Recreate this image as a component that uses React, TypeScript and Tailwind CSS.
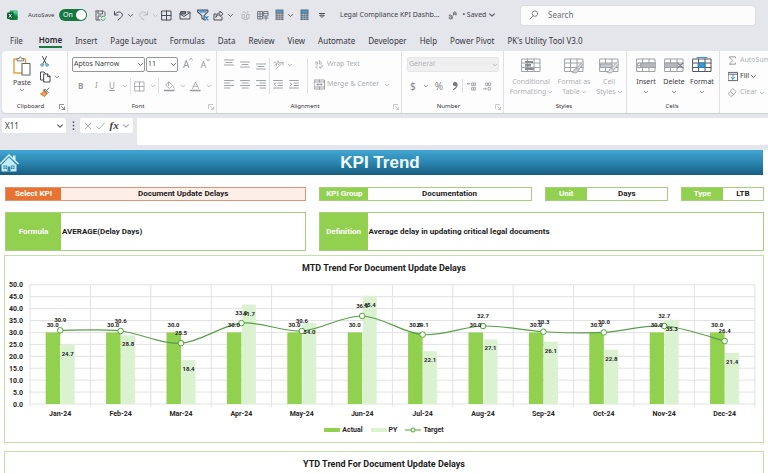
import React from "react";
import type { ReactNode } from "react";

type IconProps = { w?: number; h?: number; box?: string; color?: string; children: ReactNode };

function Icon({ w = 11, h = 11, box = "0 0 22 22", color = "#4b4d55", children }: IconProps) {
  return (
    <svg
      width={w}
      height={h}
      viewBox={box}
      fill="none"
      stroke={color}
      strokeWidth="2"
      strokeLinecap="round"
      strokeLinejoin="round"
      aria-hidden="true"
      className="shrink-0"
    >
      {children}
    </svg>
  );
}

function Chevron({ color = "#5d5f66", size = 5 }: { color?: string; size?: number }) {
  return (
    <Icon w={size} h={size} box="0 0 10 10" color={color}>
      <path d="M1 3l4 4 4-4" />
    </Icon>
  );
}

function Tool({ label, className = "", children }: { label: string; className?: string; children: ReactNode }) {
  return (
    <button type="button" aria-label={label} className={`flex shrink-0 items-center ${className}`}>
      {children}
    </button>
  );
}

function Calculator({ color }: { color: string }) {
  return (
    <Icon w={9} h={12} box="0 0 18 24" color={color}>
      <rect x="1" y="1" width="16" height="21" fill={color} stroke="none" />
      <rect x="3" y="3" width="12" height="4" fill="#4a9fd8" stroke="none" />
      <path d="M1 10.5h16M1 14.5h16M1 18.500h16M6.500 9v13M11.500 9v13" stroke="#d5d8de" strokeWidth="1" />
    </Icon>
  );
}

function TitleBar() {
  return (
    <header className="flex h-[30px] items-center text-[7px] text-[#3f4148]">
      <svg width="11" height="11" viewBox="0 0 22 22" className="ml-[7px] shrink-0" aria-label="Excel" role="img">
        <rect x="5" y="1" width="16" height="19" rx="2" fill="#21a366" />
        <path d="M13 1h6a2 2 0 012 2v4h-8z" fill="#5fd08c" />
        <path d="M5 11h16v7a2 2 0 01-2 2H7a2 2 0 01-2-2z" fill="#107c41" />
        <rect x="0" y="5" width="13" height="13" rx="2" fill="#0b6134" />
        <path d="M4 8l5 7M9 8l-5 7" stroke="#fff" strokeWidth="1.8" />
      </svg>
      <label className="ml-[10px] flex shrink-0 items-center text-[6px]">
        <span className="w-[31px]">AutoSave</span>
        <input type="checkbox" defaultChecked className="peer sr-only" />
        <span className="flex h-3 w-7 items-center justify-between rounded-full bg-[#187741] pr-px pl-1 text-[7px] text-white">
          On
          <span className="size-[10px] rounded-full bg-white" />
        </span>
      </label>
      <Tool label="Save" className="ml-2">
        <Icon>
          <path d="M2 2h15l3 3v6M2 2v18h8M6 2v6h9V2M6 20v-8h6" stroke="#5f6369" />
          <path d="M13 15a4 4 0 017-1M20 18a4 4 0 01-7 1" stroke="#3ba55d" />
        </Icon>
      </Tool>
      <Tool label="Undo" className="ml-[7px] gap-1">
        <Icon>
          <path d="M3 3v7h7M3.500 9.500C7 4 13 2.500 16.500 5.500S19 12 16 15l-6 5" />
        </Icon>
        <Chevron />
      </Tool>
      <Tool label="Redo" className="ml-[5px] gap-1">
        <Icon color="#b9bbc2">
          <path d="M19 3v7h-7M18.500 9.500C15 4 9 2.500 5.500 5.500S3 12 6 15l6 5" />
        </Icon>
        <Chevron color="#c3c5cb" />
      </Tool>
      <Tool label="Borders" className="ml-[3px]">
        <Icon>
          <path d="M2 2h18v18H2zM11 2v18M2 11h18" strokeLinejoin="miter" />
        </Icon>
      </Tool>
      <Tool label="Email" className="ml-[7px]">
        <Icon w={12}>
          <path d="M1 7v11h20V4h-6M1 8l8 5 12-8" />
          <path d="M3 3h9v5H3z" fill="#777b82" />
        </Icon>
      </Tool>
      <Tool label="Filter" className="ml-[6px]">
        <Icon w={12} h={12}>
          <path d="M1 2h19v3l-7 7v8l-4-3v-5L1 5z" />
          <path d="M3 3h15l-2 4H6z" fill="#4a9fd8" stroke="none" />
          <path d="M15 14l5 6M20 14l-5 6" stroke="#2f86c8" strokeWidth="2.500" />
        </Icon>
      </Tool>
      <Tool label="Share" className="ml-1 gap-1">
        <Icon>
          <path d="M6 8H2v12h16v-6M6 14c0-6 4-8 8-8V2l6 6-6 5V9.500c-4 0-6 1.500-8 4.500z" />
        </Icon>
        <Chevron />
      </Tool>
      <Tool label="Switch" className="ml-2">
        <Icon w={10} color="#b1b3ba">
          <path d="M4 4c3-2 6-1 7 2M3 9h5v8H3zM13 9h5v8h-5zM7 20c3 1 6 0 8-1M15 2v4" />
        </Icon>
      </Tool>
      <Tool label="Lookup" className="ml-[6px]">
        <Icon w={12} color="#777a80">
          <path d="M1 3h9v15H1zM13 3h8v9h-8zM1 8h9M1 13h9M5 3v15M13 7h8M12 16h9M17 12v8" />
        </Icon>
      </Tool>
      <Tool label="Calculate now" className="ml-[6px] gap-1">
        <Calculator color="#6b6f76" />
        <Chevron />
      </Tool>
      <Tool label="Calculate sheet" className="ml-[7px]">
        <Calculator color="#54697c" />
      </Tool>
      <Tool label="Customize toolbar" className="ml-[10px]">
        <Icon w={6} h={7} box="0 0 12 14">
          <path d="M1 3h10M2 7l4 4 4-4z" />
        </Icon>
      </Tool>
      <h1 className="mr-[9px] ml-[15px] shrink-0 whitespace-nowrap">Legal Compliance KPI Dashb...</h1>
      <Icon w={9} h={9} box="0 0 18 18" color="#63656c">
        <path d="M2 9c3-2 6-1 6 2v5M8 12c-4-1-6 0-6 2s4 3 6 0M11 8V4c0-3 5-3 5 0v4M11 6h5" />
      </Icon>
      <button type="button" className="ml-[5px] flex shrink-0 items-center gap-[3px] whitespace-nowrap">
        • Saved
        <Chevron size={6} />
      </button>
      <label className="ml-auto mr-[13px] flex h-[19px] w-[234px] items-center gap-[9px] rounded-[2px] bg-[#fcfcfc] px-2 shadow-[0_0_1px_#9a9ca3]">
        <Icon w={10} h={10} color="#77797f">
          <circle cx="13" cy="8" r="6" />
          <path d="M9 13l-7 7" />
        </Icon>
        <input aria-label="Search" placeholder="Search" className="min-w-0 flex-1 text-[8px] outline-none placeholder:text-[#6d6f75]" />
      </label>
    </header>
  );
}

const tabs = [
  "File", "Home", "Insert", "Page Layout", "Formulas", "Data", "Review",
  "View", "Automate", "Developer", "Help", "Power Pivot", "PK's Utility Tool V3.0",
];

function Tabs() {
  return (
    <nav className="flex h-[21px] items-start gap-[13px] pl-[10px] text-[8px] whitespace-nowrap text-[#35373e]">
      {tabs.map((tab) =>
        tab === "Home" ? (
          <button key={tab} type="button" className="ml-[3px] h-[18px] border-b-2 border-[#1c7a46] pt-1 font-semibold text-[#26282d]">
            {tab}
          </button>
        ) : (
          <button key={tab} type="button" className="h-[18px] pt-1">
            {tab}
          </button>
        ),
      )}
    </nav>
  );
}

function Launcher({ color }: { color: string }) {
  return (
    <Icon w={6} h={6} box="0 0 12 12" color={color}>
      <path d="M1 9V1h8M5 5l6 6M11 6v5H6" strokeWidth="1.500" />
    </Icon>
  );
}

function Group({ name, width, launcher, children }: { name: string; width: string; launcher?: string; children: ReactNode }) {
  return (
    <section aria-label={name} className={`flex shrink-0 flex-col border-r border-[#e1e1e4] ${width}`}>
      <div className="h-[49px]">{children}</div>
      <div className="flex h-[13px] items-center pr-[2px] text-[6px] text-[#2f3136]">
        <span className="flex-1 text-center">{name}</span>
        {launcher && <Launcher color={launcher} />}
      </div>
    </section>
  );
}

const OFF = "#a9abb0";

function ClipboardGroup() {
  return (
    <Group name="Clipboard" width="w-[66px]" launcher="#66686e">
      <div className="flex gap-1 pt-[5px] pl-[10px] text-[7px] text-[#3a3c42]">
        <button type="button" className="flex w-5 flex-col items-center leading-[10px]">
          <Icon w={20} h={20} box="0 0 40 40">
            <path d="M10 6H4v28h16M27 14V6h-6" stroke="#e2a24a" strokeWidth="3" />
            <path d="M10 9V5h4c0-4 5-4 5 0h4v4z" fill="#e9e9ea" stroke="#7d7f84" />
            <rect x="20" y="15" width="16" height="23" fill="#fff" stroke="#66686e" strokeWidth="2.200" />
          </Icon>
          <span className="mt-[2px]">Paste</span>
          <Chevron size={4} />
        </button>
        <div className="flex flex-col gap-1 pl-1">
          <Tool label="Cut">
            <Icon w={9} h={11} box="0 0 18 22">
              <path d="M5 1l7 14M13 1L6 15" />
              <circle cx="4" cy="18" r="2.500" stroke="#3b8ecb" />
              <circle cx="14" cy="18" r="2.500" stroke="#3b8ecb" />
            </Icon>
          </Tool>
          <Tool label="Copy" className="gap-1">
            <Icon w={11} h={12} box="0 0 22 24">
              <path d="M8 18H1V2h7l3 3M8 6h7l5 5v11H8zM15 6v5h5" />
            </Icon>
            <Chevron size={4} />
          </Tool>
          <Tool label="Format painter">
            <Icon w={10} h={10}>
              <path d="M20 2l-6 6M11 5l7 7-2 2-7-7z" stroke="#55575d" />
              <path d="M8 8l7 7-5 6-9-6c4-1 6-4 7-7z" fill="#f0a050" stroke="#cc6f27" />
            </Icon>
          </Tool>
        </div>
      </div>
    </Group>
  );
}

function FontGroup() {
  return (
    <Group name="Font" width="w-[149px]" launcher="#b5b7bc">
      <div className="flex flex-col gap-[6px] pt-[6px] pl-1">
        <div className="flex h-[15px] items-center text-[7px] text-[#3a3c42]">
          <div className="relative h-[15px] w-[73px]">
            <select aria-label="Font" className="block h-full w-full appearance-none rounded-[2px] border border-[#94969b] bg-white pl-px">
              <option>Aptos Narrow</option>
            </select>
            <span className="pointer-events-none absolute inset-y-0 right-[2px] flex items-center"><Chevron /></span>
          </div>
          <div className="relative ml-px h-[15px] w-8">
            <select aria-label="Font size" className="block h-full w-full appearance-none rounded-[2px] border border-[#94969b] bg-white pl-px">
              <option>11</option>
            </select>
            <span className="pointer-events-none absolute inset-y-0 right-[2px] flex items-center"><Chevron /></span>
          </div>
          <button type="button" aria-label="Grow font" className="ml-[5px] flex text-[10px] text-[#97999f]">
            A<Icon w={4} h={4} box="0 0 8 8" color={OFF}><path d="M1 6l3-4 3 4" /></Icon>
          </button>
          <button type="button" aria-label="Shrink font" className="ml-[7px] flex text-[9px] text-[#97999f]">
            A<Icon w={4} h={4} box="0 0 8 8" color={OFF}><path d="M1 2l3 4 3-4" /></Icon>
          </button>
        </div>
        <div className="flex h-4 items-center text-[8px] text-[#97999f]">
          <button type="button" className="ml-[6px] w-4 text-left font-bold">B</button>
          <button type="button" className="w-[15px] pl-px text-left font-serif italic">I</button>
          <button type="button" className="flex items-center gap-2 underline">U<Chevron color={OFF} size={4} /></button>
          <span className="mx-[3px] h-4 w-px bg-[#dfe0e2]" />
          <Tool label="Borders" className="gap-[6px]">
            <Icon color="#97999f"><path d="M2 2h18v18H2zM11 2v18M2 11h18" strokeWidth="1.500" /></Icon>
            <Chevron color={OFF} size={4} />
          </Tool>
          <span className="ml-[3px] mr-[5px] h-4 w-px bg-[#dfe0e2]" />
          <Tool label="Fill color" className="gap-[6px]">
            <Icon color="#97999f">
              <path d="M10 2l7 7-6 6-7-6zM9 2v7M18 10l2 4" strokeWidth="1.500" />
              <path d="M1 19h19" strokeWidth="3" />
            </Icon>
            <Chevron color={OFF} size={4} />
          </Tool>
          <Tool label="Font color" className="ml-[5px] gap-[6px]">
            <Icon color="#97999f">
              <path d="M5 15l6-13 6 13M7 10.500h8" strokeWidth="1.500" />
              <path d="M1 19h19" strokeWidth="3" />
            </Icon>
            <Chevron color={OFF} size={4} />
          </Tool>
        </div>
      </div>
    </Group>
  );
}

function Lines({ d }: { d: string }) {
  return (
    <Icon w={10} h={11} box="0 0 20 22" color="#a0a2a7">
      <path d={d} />
    </Icon>
  );
}

function AlignmentGroup() {
  return (
    <Group name="Alignment" width="w-[185px]" launcher="#b5b7bc">
      <div className="flex h-full items-start pt-[7px] pl-[7px] text-[7px] text-[#aeb0b4]">
        <div className="grid grid-cols-3 gap-x-[6px] gap-y-[9px] pt-px">
          <Tool label="Top align"><Lines d="M1 2h18M4 7h12M1 12h18" /></Tool>
          <Tool label="Middle align"><Lines d="M1 6h18M4 11h12M1 16h18" /></Tool>
          <Tool label="Bottom align"><Lines d="M1 10h18M4 15h12M1 20h18" /></Tool>
          <Tool label="Align left"><Lines d="M1 3h18M1 8h11M1 13h18M1 18h11" /></Tool>
          <Tool label="Center"><Lines d="M1 3h18M4 8h12M1 13h18M4 18h12" /></Tool>
          <Tool label="Align right"><Lines d="M1 3h18M8 8h11M1 13h18M8 18h11" /></Tool>
        </div>
        <span className="mx-[3px] h-9 w-px bg-[#dfe0e2]" />
        <div className="flex w-[30px] flex-col gap-[9px] pt-px">
          <Tool label="Orientation" className="gap-1">
            <Icon w={11} color="#a5a7ac">
              <path d="M6 20L20 7M20 7v5M20 7h-5M2 7c3-2 5 0 5 3v3M7 10c-4 0-5 4-2 4M10 3v8c4 1 6-5 0-5" strokeWidth="1.500" />
            </Icon>
            <Chevron color={OFF} size={4} />
          </Tool>
          <div className="flex gap-[6px]">
            <Tool label="Decrease indent"><Lines d="M1 3h18M10 8h9M10 13h9M1 18h18M6 8l-4 2.500 4 3" /></Tool>
            <Tool label="Increase indent"><Lines d="M1 3h18M10 8h9M10 13h9M1 18h18M2 8l4 2.500-4 3" /></Tool>
          </div>
        </div>
        <span className="ml-1 mr-[6px] h-9 w-px bg-[#dfe0e2]" />
        <div className="flex flex-col gap-[9px] pt-px">
          <button type="button" className="flex h-[11px] items-center gap-[3px]">
            <Icon w={10} color="#a5a7ac">
              <path d="M3 6c4-2 5 0 5 4M8 8c-5-1-6 3-3 3M12 2v8c6 1 6-6 0-5M8 14c-5-1-5 6 0 5M12 17h5c3 0 3-5 0-5M15 14l-3 3 3 3" strokeWidth="1.700" />
            </Icon>
            Wrap Text
          </button>
          <button type="button" className="flex h-[11px] items-center gap-[2px] whitespace-nowrap">
            <Icon w={11} color="#85878d">
              <path d="M1 2h20v18H1zM1 6h20M1 16h20M6 11h10M8 9l-2 2 2 2M14 9l2 2-2 2M11 2v4M11 16v4" strokeWidth="1.500" />
            </Icon>
            <span className="mr-1">Merge &amp; Center</span>
            <Chevron color={OFF} size={4} />
          </button>
        </div>
      </div>
    </Group>
  );
}

function NumberGroup() {
  return (
    <Group name="Number" width="w-[102px]" launcher="#b5b7bc">
      <div className="flex flex-col gap-1 pt-[6px] pl-[5px]">
        <div className="relative h-[15px] w-[92px]">
          <select aria-label="Number format" disabled className="block h-full w-full appearance-none rounded-[2px] border border-[#e6e6e8] bg-[#efeff0] pl-px text-[7px] text-[#b0b2b6] opacity-100">
            <option>General</option>
          </select>
          <span className="pointer-events-none absolute inset-y-0 right-[2px] flex items-center"><Chevron color={OFF} size={4} /></span>
        </div>
        <div className="flex h-5 items-center text-[10px] text-[#85878d]">
          <button type="button" aria-label="Currency" className="ml-[3px] flex items-center gap-2">$<Chevron size={4} color="#77797f" /></button>
          <button type="button" aria-label="Percent" className="ml-[7px]">%</button>
          <Tool label="Comma style" className="ml-[9px]">
            <Icon w={6} h={10} box="0 0 12 20" color="#77797f">
              <path d="M10 6c0 6-3 9-7 11" strokeWidth="2.500" />
              <circle cx="6" cy="6" r="3.500" fill="#77797f" />
            </Icon>
          </Tool>
          <span className="mx-1 h-[14px] w-px bg-[#dfe0e2]" />
          <Tool label="Increase decimal">
            <Icon w={10} color="#97999f">
              <path d="M7 5H1M3 3L1 5l2 2M11 3h3v6h-3zM16 3h3v6h-3zM11 13h3v6h-3zM16 13h3v6h-3z" strokeWidth="1.700" />
            </Icon>
          </Tool>
          <Tool label="Decrease decimal" className="ml-[6px]">
            <Icon w={10} color="#97999f">
              <path d="M1 16h6M5 14l2 2-2 2M7 3h3v6H7zM13 3h4v6h-4zM12 13h4v6h-4z" strokeWidth="1.700" />
            </Icon>
          </Tool>
        </div>
      </div>
    </Group>
  );
}

function GridIcon({ color = "#a0a2a7", children }: { color?: string; children?: ReactNode }) {
  return (
    <Icon w={20} h={17} box="0 0 40 34" color={color}>
      <path d="M2 4h36v25H2zM2 12h36M2 21h36M13 4v25M26 4v25" />
      {children}
    </Icon>
  );
}

function StylesGroup() {
  return (
    <Group name="Styles" width="w-[123px]">
      <div className="flex pt-[6px] pl-[4px] text-center text-[7px] leading-[10px] text-[#b0b2b6]">
        <button type="button" className="flex w-[46px] flex-col items-center">
          <GridIcon><path d="M8 8h16v4H8zM8 14h12v5H8zM8 22h18v4H8z" fill="#8a8c91" stroke="none" /></GridIcon>
          <span className="mt-[3px]">Conditional</span>
          <span className="flex items-center gap-[2px]">Formatting<Chevron color={OFF} size={4} /></span>
        </button>
        <button type="button" className="flex w-[40px] flex-col items-center whitespace-nowrap">
          <GridIcon><path d="M38 9L25 22l4 4 10-12M25 23c-5 0-4 6-9 7 6 4 12 1 13-4" fill="#d4d5d7" /></GridIcon>
          <span className="mt-[3px]">Format as</span>
          <span className="flex items-center gap-[2px]">Table<Chevron color={OFF} size={4} /></span>
        </button>
        <button type="button" className="flex w-[30px] flex-col items-center">
          <GridIcon><path d="M4 14h22v7H4z" fill="#c9cacd" /><path d="M38 9L25 22l4 4 10-12M25 23c-5 0-4 6-9 7 6 4 12 1 13-4" fill="#e4e4e6" /></GridIcon>
          <span className="mt-[3px]">Cell</span>
          <span className="flex items-center gap-[2px]">Styles<Chevron color={OFF} size={4} /></span>
        </button>
      </div>
    </Group>
  );
}

function CellsGroup() {
  return (
    <Group name="Cells" width="w-[93px]">
      <div className="flex pt-[6px] pl-[5px] text-[7px] leading-[10px] text-[#3a3c42]">
        <button type="button" className="flex w-7 flex-col items-center gap-[3px]">
          <GridIcon><path d="M10 12h30v9H10z" fill="#b5b7bb" /><path d="M12 16.500H1M6 12l-5 4.500L6 21" /></GridIcon>
          <span>Insert</span>
          <Chevron size={4} />
        </button>
        <button type="button" className="flex w-7 flex-col items-center gap-[3px]">
          <GridIcon><path d="M2 12h24v9H2z" fill="#b5b7bb" /><path d="M27 12l11 10M38 12L27 22" stroke="#85878d" strokeWidth="2.500" /></GridIcon>
          <span>Delete</span>
          <Chevron size={4} />
        </button>
        <button type="button" className="flex w-7 flex-col items-center gap-[3px]">
          <GridIcon color="#55575d"><path d="M13 12h13v9H13z" fill="#3d95d2" stroke="#2d7db5" /><path d="M10 1h20" stroke="#3d95d2" strokeWidth="2" /></GridIcon>
          <span>Format</span>
          <Chevron size={4} />
        </button>
      </div>
    </Group>
  );
}

function EditingGroup() {
  return (
    <section aria-label="Editing" className="flex flex-1 flex-col gap-[5px] overflow-hidden pt-1 pl-2 text-[7px] whitespace-nowrap text-[#b0b2b6]">
      <button type="button" className="flex h-[11px] items-center gap-[3px]">
        <Icon w={9} color="#85878d"><path d="M18 5V2H3l9 9-9 9h15v-3" /></Icon>
        AutoSum
      </button>
      <button type="button" className="flex h-[11px] items-center gap-[2px] text-[#3a3c42]">
        <Icon w={10} color="#55575d">
          <path d="M1 2h20v18H1zM1 6h20" />
          <path d="M11 8v9M7 13l4 4 4-4" stroke="#2f86c8" />
        </Icon>
        Fill <Chevron />
      </button>
      <button type="button" className="flex h-[11px] items-center gap-[3px]">
        <Icon w={9} color="#97999f"><path d="M12 2l8 7-10 11H6l-5-5zM6 9l8 7" /></Icon>
        Clear <Chevron color={OFF} size={4} />
      </button>
    </section>
  );
}

function FormulaBar() {
  return (
    <div className="flex h-8 items-start pt-[5px]">
      <label className="ml-[2px] flex h-[15px] w-16 items-center rounded-[2px] bg-white px-[3px]">
        <input aria-label="Name box" defaultValue="X11" className="min-w-0 flex-1 text-[8px] text-[#3a3c42] outline-none" />
        <Chevron size={6} />
      </label>
      <span className="flex h-[15px] w-[14px] items-center justify-center">
        <Icon w={3} h={9} box="0 0 6 18"><path d="M3 2v.1M3 9v.1M3 16v.1" strokeWidth="3.500" /></Icon>
      </span>
      <div className="flex h-[15px] w-[53px] items-center justify-between rounded-[2px] bg-white px-1">
        <Tool label="Cancel"><Icon w={8} h={8} box="0 0 16 16" color="#aeb0b4"><path d="M2 2l12 12M14 2L2 14" /></Icon></Tool>
        <Tool label="Enter"><Icon w={9} h={8} box="0 0 18 16" color="#aeb0b4"><path d="M1 9l5 5L17 2" /></Icon></Tool>
        <button type="button" aria-label="Insert function" className="font-['Liberation_Serif',serif] text-[11px] leading-none font-bold text-[#3a3c42] italic">fx</button>
        <Chevron color={OFF} size={6} />
      </div>
      <input aria-label="Formula bar" className="ml-1 h-[27px] min-w-0 flex-1 bg-white outline-none" />
    </div>
  );
}

type FieldProps = { label: string; value: string; labelWidth: string; tall?: boolean; orange?: boolean };

function Field({ label, value, labelWidth, tall, orange }: FieldProps) {
  return (
    <dl className={`flex border ${tall ? "h-[39px]" : "h-[14px]"} ${orange ? "border-[#dd9475] bg-[#fdeee7]" : "border-[#a5cf7c] bg-white"} text-[8px] font-bold`}>
      <dt className={`flex shrink-0 items-center justify-center text-white ${labelWidth} ${orange ? "bg-[#e87331]" : "bg-[#92d050]"}`}>{label}</dt>
      <dd className={`flex flex-1 items-center text-[#1c1c1c] ${tall ? "pl-px" : "justify-center"}`}>{value}</dd>
    </dl>
  );
}

const months = ["Jan", "Feb", "Mar", "Apr", "May", "Jun", "Jul", "Aug", "Sep", "Oct", "Nov", "Dec"];
const actual = months.map(() => 30);
const previous = [24.7, 28.8, 18.4, 41.7, 34.0, 45.4, 22.1, 27.1, 26.1, 22.8, 35.3, 21.4];
const target = [30.9, 30.6, 25.5, 33.9, 30.6, 36.9, 29.1, 32.7, 30.3, 30.0, 32.7, 26.4];
const ticks = [0, 5, 10, 15, 20, 25, 30, 35, 40, 45, 50];

const LEFT = 25;
const STEP = 60.4;
const BASE = 122;
const RIGHT = LEFT + STEP * months.length;
const yOf = (v: number) => BASE - v * 2.385;
const xOf = (i: number) => LEFT + STEP * (i + 0.5);

function smoothPath(values: number[]) {
  const at = (i: number) => {
    const k = Math.max(0, Math.min(values.length - 1, i));
    return [xOf(k), yOf(values[k])];
  };
  let d = `M${at(0).join(" ")}`;
  for (let i = 0; i < values.length - 1; i++) {
    const [p, a, b, n] = [at(i - 1), at(i), at(i + 1), at(i + 2)];
    d += `C${a[0] + (b[0] - p[0]) / 6} ${a[1] + (b[1] - p[1]) / 6} ${b[0] - (n[0] - a[0]) / 6} ${b[1] - (n[1] - a[1]) / 6} ${b[0]} ${b[1]}`;
  }
  return d;
}

function TrendChart() {
  return (
    <svg viewBox="0 0 758 138" className="block w-full overflow-visible font-bold" role="img" aria-label="Monthly actual, previous year and target values">
      <g stroke="#e2e2e4" strokeWidth="1">
        {ticks.map((t) => <line key={t} x1={LEFT} x2={RIGHT} y1={yOf(t)} y2={yOf(t)} />)}
        {[...months, ""].map((m, i) => <line key={m} x1={LEFT + STEP * i} x2={LEFT + STEP * i} y1={yOf(50)} y2={BASE + 3} />)}
      </g>
      <g fontSize="7" fill="#262626">
        {ticks.map((t) => <text key={t} x="18" y={yOf(t) + 2.5} textAnchor="end">{t.toFixed(1)}</text>)}
        {months.map((m, i) => <text key={m} x={xOf(i)} y="134" textAnchor="middle">{m}-24</text>)}
      </g>
      {months.map((m, i) => (
        <g key={m}>
          <rect x={xOf(i) - 14.5} width="14.500" y={yOf(actual[i])} height={BASE - yOf(actual[i])} fill="#92d050" />
          <rect x={xOf(i) + 0.5} width="14" y={yOf(previous[i])} height={BASE - yOf(previous[i])} fill="#daf2d0" />
        </g>
      ))}
      <path d={smoothPath(target)} fill="none" stroke="#5a9e4b" strokeWidth="1.200" />
      {target.map((v, i) => <circle key={months[i]} cx={xOf(i)} cy={yOf(v)} r="2.800" fill="#fff" stroke="#4ea72e" strokeWidth="1" />)}
      <g fontSize="6" fill="#262626" textAnchor="middle">
        {months.map((m, i) => (
          <g key={m}>
            <text x={xOf(i) - 7.5} y={yOf(actual[i]) - 5}>{actual[i].toFixed(1)}</text>
            <text x={xOf(i) + 7.5} y={yOf(previous[i]) + 11}>{previous[i].toFixed(1)}</text>
            <text x={xOf(i)} y={yOf(target[i]) - 8}>{target[i].toFixed(1)}</text>
          </g>
        ))}
      </g>
    </svg>
  );
}

export default function App() {
  return (
    <div className="h-screen overflow-hidden bg-white font-['Noto_Sans',sans-serif]">
      <div className="bg-[#e5e6ec] pb-[5px]">
        <TitleBar />
        <Tabs />
        <div className="ml-[2px] flex h-[62px] overflow-hidden rounded-l-[4px] bg-[#fdfdfd] shadow-[0_1px_1px_#cfd0d6]">
          <ClipboardGroup />
          <FontGroup />
          <AlignmentGroup />
          <NumberGroup />
          <StylesGroup />
          <CellsGroup />
          <EditingGroup />
        </div>
        <FormulaBar />
      </div>
      <main className="font-[Roboto,sans-serif]">
        <div className="mr-[5px] flex h-[25px] items-center bg-linear-to-b from-[#42a6d2] via-[#2b86b0] to-[#165d80]">
          <a href="#home" aria-label="Home" className="w-[19px] shrink-0">
            <svg width="19" height="20" viewBox="0 0 38 40" aria-hidden="true">
              <path d="M26 5h5v9h-5z" fill="#d8f3fb" />
              <path d="M0 22L18 4l19 18" fill="none" stroke="#d8f3fb" strokeWidth="3" />
              <path d="M18 9l15 15v13H3V24z" fill="#c5ecf8" />
              <path d="M7 25h7v7H7zM22 25h7v7h-7zM15 27h6v10h-6z" fill="#2b86b0" />
              <path d="M10.500 25v7M7 28.500h7M25.500 25v7M22 28.500h7" stroke="#e5f8fd" />
            </svg>
          </a>
          <h2 className="flex-1 pr-[22px] text-center font-['Liberation_Sans',Arial,sans-serif] text-[17px] font-bold text-[#f1fbfe]">KPI Trend</h2>
        </div>
        <div className="mx-1 pt-3">
          <div className="ml-px grid grid-cols-[301fr_212fr_123fr_83fr] gap-[13px]">
            <Field label="Select KPI" value="Document Update Delays" labelWidth="w-[55px]" orange />
            <Field label="KPI Group" value="Documentation" labelWidth="w-[48px]" />
            <Field label="Unit" value="Days" labelWidth="w-[41px]" />
            <Field label="Type" value="LTB" labelWidth="w-[41px]" />
          </div>
          <div className="mt-[11px] ml-px grid grid-cols-[301fr_446fr] gap-[13px]">
            <Field label="Formula" value="AVERAGE(Delay Days)" labelWidth="w-[55px]" tall />
            <Field label="Definition" value="Average delay in updating critical legal documents" labelWidth="w-[48px]" tall />
          </div>
          <section className="mt-1 border border-[#c3dfaa] bg-white pb-[2px]">
            <h3 className="flex h-[26px] items-center justify-center text-[9px] font-bold text-[#1c1c1c]">MTD Trend For Document Update Delays</h3>
            <TrendChart />
            <div className="flex h-5 items-center justify-center gap-2 text-[7px] font-bold text-[#262626]">
              <span className="flex items-center gap-[2px]"><span className="h-1 w-4 bg-[#92d050]" />Actual</span>
              <span className="flex items-center gap-[2px]"><span className="h-1 w-4 bg-[#daf2d0]" />PY</span>
              <span className="flex items-center gap-[2px]">
                <svg width="16" height="6" viewBox="0 0 16 6" aria-hidden="true">
                  <path d="M0 3h16" stroke="#4ea72e" />
                  <circle cx="8" cy="3" r="2" fill="#fff" stroke="#4ea72e" />
                </svg>
                Target
              </span>
            </div>
          </section>
          <section className="mt-2 border border-b-0 border-[#c3dfaa] bg-white">
            <h3 className="flex h-[26px] items-center justify-center text-[9px] font-bold text-[#1c1c1c]">YTD Trend For Document Update Delays</h3>
          </section>
        </div>
      </main>
    </div>
  );
}
